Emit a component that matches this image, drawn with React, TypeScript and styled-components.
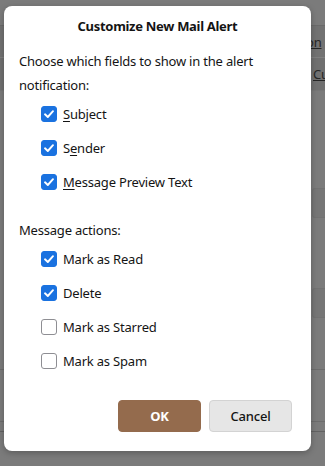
import * as React from 'react';
import styled, { createGlobalStyle } from 'styled-components';

const GlobalStyle = createGlobalStyle`
    html, body {
        margin: 0;
        padding: 0;
        width: 325px;
        height: 466px;
        overflow: hidden;
    }
    body {
        font-family: "Noto Sans", "Open Sans", sans-serif;
        color: #141414;
    }
`;

const Backdrop = styled.div`
    position: relative;
    width: 325px;
    height: 466px;
    background: #7b7b7b;
    overflow: hidden;
`;

// faded page behind the overlay
const PageBehind = styled.div`
    display: flex;
    flex-direction: column;
    padding-top: 25px;
`;

const BgRow = styled.div<{ h: number; shade?: string; edge?: string }>`
    height: ${p => p.h}px;
    background: ${p => p.shade || 'transparent'};
    border-top: 1px solid ${p => p.edge || 'transparent'};
    display: flex;
    justify-content: flex-end;
    align-items: center;
    font-size: 13px;
    letter-spacing: -0.2px;
    color: #262626;
    box-sizing: border-box;
`;

const BgText = styled.span<{ w: number }>`
    width: ${p => p.w}px;
    overflow: hidden;
    white-space: nowrap;
    text-decoration: underline;
    text-decoration-thickness: 1px;
`;

const BgChip = styled.div`
    width: 12px;
    height: 28px;
    border-radius: 3px 0 0 3px;
    background: #767676;
    border: 1px solid #727272;
    border-right: none;
`;

const Dialog = styled.div`
    position: absolute;
    left: 4px;
    top: 6px;
    width: 307px;
    height: 445px;
    box-sizing: border-box;
    background: #ffffff;
    border-radius: 8px;
    box-shadow: 0 2px 6px rgba(0, 0, 0, 0.25);
    padding: 10px 19px 19px 15px;
    display: flex;
    flex-direction: column;
`;

const Title = styled.h2`
    margin: 0;
    font-size: 13px;
    line-height: 20px;
    font-weight: 700;
    letter-spacing: -0.3px;
    text-align: center;
    padding-left: 4px;
    color: #141414;
`;

const Para = styled.p<{ gap: number }>`
    margin: ${p => p.gap}px 0 0 0;
    font-size: 13px;
    letter-spacing: -0.2px;
    line-height: 24px;
    color: #141414;
`;

const List = styled.div`
    display: flex;
    flex-direction: column;
    padding-left: 22px;
`;

const Row = styled.label`
    display: flex;
    align-items: center;
    gap: 6px;
    height: 34px;
    font-size: 13px;
    letter-spacing: -0.2px;
    color: #141414;
    cursor: default;
`;

const Box = styled.span<{ on: boolean }>`
    width: 16px;
    height: 16px;
    box-sizing: border-box;
    border-radius: 3px;
    flex: none;
    display: flex;
    align-items: center;
    justify-content: center;
    background: ${p => (p.on ? '#1a72e0' : '#ffffff')};
    border: 1px solid ${p => (p.on ? '#1a72e0' : '#8e8e93')};
`;

const Key = styled.span`
    text-decoration: underline;
    text-underline-offset: 2px;
    text-decoration-thickness: 1px;
`;

const Footer = styled.div`
    display: flex;
    justify-content: flex-end;
    gap: 8px;
    margin-top: auto;
`;

const Button = styled.button<{ primary?: boolean }>`
    width: 83px;
    height: 32px;
    border-radius: 4px;
    font-family: "Noto Sans", "Open Sans", sans-serif;
    font-size: 13px;
    letter-spacing: -0.2px;
    font-weight: ${p => (p.primary ? 700 : 500)};
    color: ${p => (p.primary ? '#ffffff' : '#141414')};
    background: ${p => (p.primary ? '#946b4d' : '#e6e6e6')};
    border: 1px solid ${p => (p.primary ? '#946b4d' : '#d3d3d3')};
    padding: 0;
    cursor: pointer;
`;

const Check = ({ on }: { on: boolean }) => (
    <Box on={on}>
        {on && (
            <svg width="12" height="12" viewBox="0 0 12 12">
                <path d="M2 6.3 L4.8 9 L10 3.2" fill="none" stroke="#fff" strokeWidth="1.9" strokeLinecap="round" strokeLinejoin="round" />
            </svg>
        )}
    </Box>
);

const fields = [
    { id: 'subject', pre: '', key: 'S', post: 'ubject', on: true },
    { id: 'sender', pre: 'S', key: 'e', post: 'nder', on: true },
    { id: 'preview', pre: '', key: 'M', post: 'essage Preview Text', on: true },
];

const actions = [
    { id: 'read', label: 'Mark as Read', on: true },
    { id: 'delete', label: 'Delete', on: true },
    { id: 'starred', label: 'Mark as Starred', on: false },
    { id: 'spam', label: 'Mark as Spam', on: false },
];

export default function App() {
    return (
        <Backdrop>
            <GlobalStyle />
            <PageBehind>
                <BgRow h={32} shade="#727272" edge="#6a6a6a"><BgText w={19}>on</BgText></BgRow>
                <BgRow h={33} shade="#707070" edge="#7f7f7f"><BgText w={12}>Cu</BgText></BgRow>
                <BgRow h={97} edge="#767676" />
                <BgRow h={30}><BgChip /></BgRow>
                <BgRow h={70} />
                <BgRow h={30}><BgChip /></BgRow>
                <BgRow h={52} />
                <BgRow h={52} edge="#6c6c6c" />
                <BgRow h={10} edge="#6c6c6c" />
                <BgRow h={30} edge="#626262" />
            </PageBehind>
            <Dialog>
                <Title>Customize New Mail Alert</Title>
                <Para gap={13}>Choose which fields to show in the alert notification:</Para>
                <List>
                    {fields.map(f => (
                        <Row key={f.id}>
                            <Check on={f.on} />
                            <span>{f.pre}<Key>{f.key}</Key>{f.post}</span>
                        </Row>
                    ))}
                </List>
                <Para gap={19}>Message actions:</Para>
                <List>
                    {actions.map(a => (
                        <Row key={a.id}>
                            <Check on={a.on} />
                            <span>{a.label}</span>
                        </Row>
                    ))}
                </List>
                <Footer>
                    <Button primary>OK</Button>
                    <Button>Cancel</Button>
                </Footer>
            </Dialog>
        </Backdrop>
    );
}
